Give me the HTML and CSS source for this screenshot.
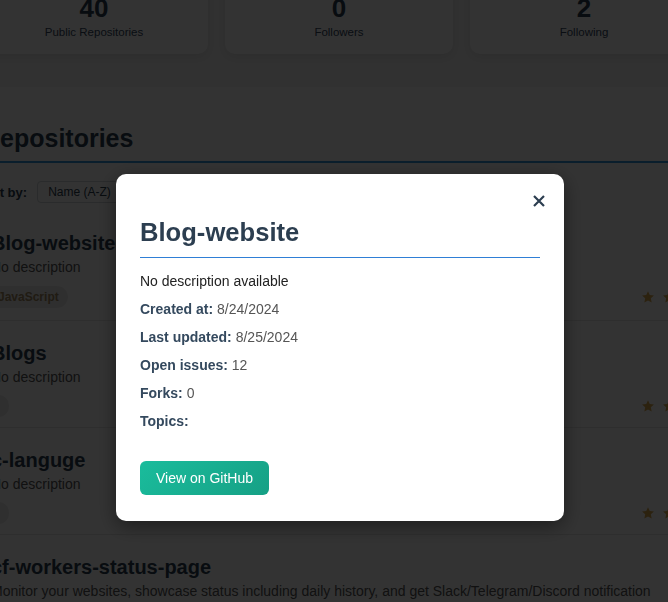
FILE: index.html
```html
<!DOCTYPE html>
<html lang="en">
<head>
<meta charset="utf-8">
<title>GitHub Profile</title>
<link rel="stylesheet" href="styles.css">
</head>
<body>
<div class="page">
  <section class="stats">
    <div class="stat-card"><div class="stat-num">40</div><div class="stat-label">Public Repositories</div></div>
    <div class="stat-card"><div class="stat-num">0</div><div class="stat-label">Followers</div></div>
    <div class="stat-card"><div class="stat-num">2</div><div class="stat-label">Following</div></div>
  </section>
  <section class="repos">
    <h2 class="repos-title">Repositories</h2>
    <div class="sort-row">
      <label class="sort-label">Sort by:</label>
      <div class="sort-select">Name (A-Z)</div>
    </div>
    <ul class="repo-list">
      <li class="repo">
        <h3 class="repo-name">Blog-website</h3>
        <p class="repo-desc">No description</p>
        <div class="repo-meta">
          <span class="lang">JavaScript</span>
          <span class="icons">
            <svg class="ico" viewBox="0 0 24 24"><path d="M12 2l3 6.6 7.2.8-5.4 4.9 1.5 7.1L12 17.8 5.7 21.4l1.5-7.1L1.8 9.4 9 8.6z"/></svg>
            <svg class="ico" viewBox="0 0 24 24"><path d="M12 2l3 6.6 7.2.8-5.4 4.9 1.5 7.1L12 17.8 5.7 21.4l1.5-7.1L1.8 9.4 9 8.6z"/></svg>
          </span>
        </div>
      </li>
      <li class="repo">
        <h3 class="repo-name">Blogs</h3>
        <p class="repo-desc">No description</p>
        <div class="repo-meta short">
          <span class="lang empty"></span>
          <span class="icons">
            <svg class="ico" viewBox="0 0 24 24"><path d="M12 2l3 6.6 7.2.8-5.4 4.9 1.5 7.1L12 17.8 5.7 21.4l1.5-7.1L1.8 9.4 9 8.6z"/></svg>
            <svg class="ico" viewBox="0 0 24 24"><path d="M12 2l3 6.6 7.2.8-5.4 4.9 1.5 7.1L12 17.8 5.7 21.4l1.5-7.1L1.8 9.4 9 8.6z"/></svg>
          </span>
        </div>
      </li>
      <li class="repo">
        <h3 class="repo-name">c-languge</h3>
        <p class="repo-desc">No description</p>
        <div class="repo-meta short">
          <span class="lang empty"></span>
          <span class="icons">
            <svg class="ico" viewBox="0 0 24 24"><path d="M12 2l3 6.6 7.2.8-5.4 4.9 1.5 7.1L12 17.8 5.7 21.4l1.5-7.1L1.8 9.4 9 8.6z"/></svg>
            <svg class="ico" viewBox="0 0 24 24"><path d="M12 2l3 6.6 7.2.8-5.4 4.9 1.5 7.1L12 17.8 5.7 21.4l1.5-7.1L1.8 9.4 9 8.6z"/></svg>
          </span>
        </div>
      </li>
      <li class="repo">
        <h3 class="repo-name">cf-workers-status-page</h3>
        <p class="repo-desc">Monitor your websites, showcase status including daily history, and get Slack/Telegram/Discord notification whenever your website status changes. Using Cloudflare Workers, CRON Triggers, and KV storage.</p>
      </li>
    </ul>
  </section>
</div>

<div class="overlay">
  <div class="modal">
    <button class="close" aria-label="Close">
      <svg viewBox="0 0 12 12"><path d="M1 1L11 11M11 1L1 11"/></svg>
    </button>
    <h2 class="modal-title">Blog-website</h2>
    <p class="m-line m-desc">No description available</p>
    <p class="m-line"><strong>Created at:</strong> 8/24/2024</p>
    <p class="m-line"><strong>Last updated:</strong> 8/25/2024</p>
    <p class="m-line"><strong>Open issues:</strong> 12</p>
    <p class="m-line"><strong>Forks:</strong> 0</p>
    <p class="m-line"><strong>Topics:</strong></p>
    <a class="gh-btn" href="#">View on GitHub</a>
  </div>
</div>
</body>
</html>
```

FILE: styles.css
```css
html, body {
  margin: 0;
  padding: 0;
  overflow: hidden;
  background: #ffffff;
}
body {
  font-family: "Liberation Sans", Arial, sans-serif;
  color: #2c3e50;
  height: 602px;
}
.page {
  margin-left: -22px;
  width: 742px;
}
.stats {
  display: flex;
  gap: 17px;
  margin-top: -36px;
  padding: 14px 2px 33px;
  background: #f3f3f3;
}
.stat-card {
  width: 228px;
  background: #ffffff;
  border-radius: 10px;
  box-shadow: 0 3px 10px rgba(0,0,0,0.08);
  padding: 14px 0 14px;
  text-align: center;
}
.stat-num {
  font-size: 26px;
  font-weight: bold;
  line-height: 32px;
  color: #2c3e50;
}
.stat-label {
  font-size: 11.5px;
  line-height: 16px;
  color: #34495e;
}
.repos {
  padding-top: 36px;
}
.repos-title {
  margin: 0;
  padding: 0 0 8px 4px;
  font-size: 25px;
  line-height: 30px;
  font-weight: bold;
  color: #2c3e50;
  border-bottom: 2px solid #3498db;
}
.sort-row {
  display: flex;
  align-items: center;
  margin-top: 18px;
  height: 22px;
}
.sort-label {
  font-size: 13px;
  font-weight: bold;
  color: #2c3e50;
}
.sort-select {
  margin-left: 10px;
  height: 20px;
  line-height: 20px;
  padding: 0 30px 0 10px;
  border: 1px solid #cfd4d9;
  border-radius: 4px;
  font-size: 12px;
  color: #2c3e50;
}
.repo-list {
  list-style: none;
  margin: 8px 0 0;
  padding: 0;
}
.repo {
  padding: 20px 44px 13px 13px;
  border-bottom: 1px solid #e6e6e6;
}
.repo-name {
  margin: 0 0 2px;
  font-size: 20px;
  line-height: 24px;
  font-weight: bold;
  color: #2c3e50;
}
.repo-desc {
  margin: 0 0 10px;
  font-size: 14px;
  line-height: 20px;
  color: #555;
}
.repo-meta {
  display: flex;
  justify-content: space-between;
  align-items: center;
  height: 20px;
}
.repo-meta.short {
  height: 17px;
}
.lang {
  display: inline-block;
  margin-left: -2px;
  padding: 3px 9px;
  border-radius: 12px;
  background: #ececec;
  color: #a08860;
  font-size: 12px;
  line-height: 16px;
  font-weight: bold;
}
.lang.empty {
  width: 2px;
  height: 16px;
}
.icons {
  display: flex;
  gap: 7px;
}
.ico {
  width: 14px;
  height: 14px;
  fill: #d9a84e;
}
.overlay {
  position: fixed;
  inset: 0;
  background: rgba(0,0,0,0.8);
  padding: 174px 0 0 116px;
}
.modal {
  position: relative;
  width: 400px;
  padding: 24px 24px 26px;
  background: #ffffff;
  border-radius: 10px;
  box-shadow: 0 5px 20px rgba(0,0,0,0.45);
}
.close {
  position: absolute;
  top: 21px;
  right: 19px;
  width: 12px;
  height: 12px;
  padding: 0;
  border: 0;
  background: none;
}
.close svg {
  display: block;
  width: 12px;
  height: 12px;
  stroke: #2c3e50;
  stroke-width: 2.2;
  fill: none;
}
.modal-title {
  margin: 20px 0 13px;
  padding-bottom: 10px;
  font-size: 25.6px;
  line-height: 29px;
  font-weight: bold;
  color: #2c3e50;
  border-bottom: 1px solid #2f7fd6;
}
.m-line {
  margin: 0 0 8px;
  font-size: 14px;
  line-height: 20px;
  color: #555;
}
.m-line strong {
  color: #34495e;
}
.m-desc {
  color: #222;
}
.gh-btn {
  display: inline-block;
  margin-top: 22px;
  padding: 8px 16px;
  line-height: 18px;
  font-size: 14px;
  color: #ffffff;
  text-decoration: none;
  border-radius: 6px;
  background: linear-gradient(135deg, #1abc9c, #16a085);
}
```
